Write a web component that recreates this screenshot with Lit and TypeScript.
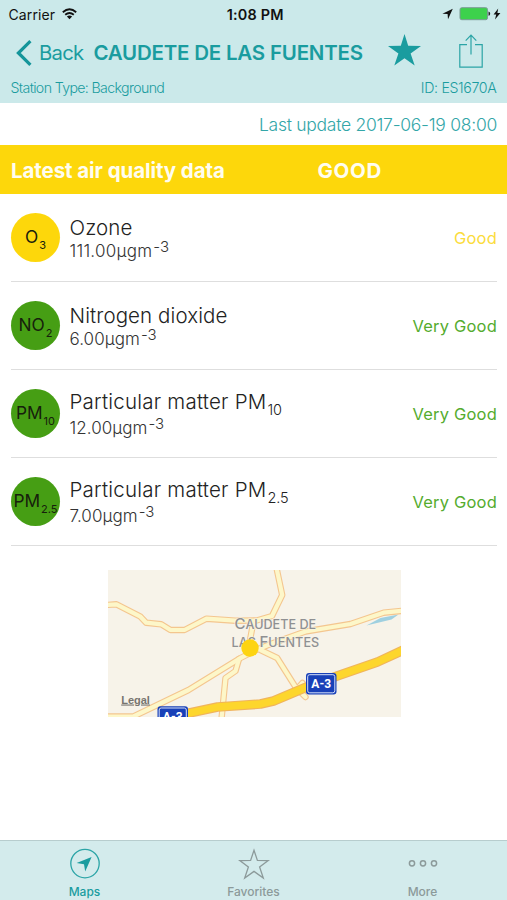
import { LitElement, html, css, svg, nothing } from "lit";
import { customElement, property } from "lit/decorators.js";

interface Reading {
  symbol: string;
  index: string;
  name: string;
  nameIndex?: string;
  value: string;
  rating: string;
  level: "good" | "very-good";
}

const READINGS: Reading[] = [
  { symbol: "O", index: "3", name: "Ozone", value: "111.00", rating: "Good", level: "good" },
  { symbol: "NO", index: "2", name: "Nitrogen dioxide", value: "6.00", rating: "Very Good", level: "very-good" },
  { symbol: "PM", index: "10", name: "Particular matter PM", nameIndex: "10", value: "12.00", rating: "Very Good", level: "very-good" },
  { symbol: "PM", index: "2.5", name: "Particular matter PM", nameIndex: "2.5", value: "7.00", rating: "Very Good", level: "very-good" },
];

@customElement("station-header")
class StationHeader extends LitElement {
  static styles = css`
    :host { display: block; height: 103px; background: #cbe9ea; color: #1a9c9f; }
    svg { display: block; flex: none; }
    .status { display: grid; grid-template-columns: 1fr auto 1fr; align-items: center; height: 28px; padding: 0 5px 0 8.5px; color: #111; font-size: 14px; }
    .carrier { display: flex; align-items: center; gap: 7px; letter-spacing: 0.1px; }
    .time { font-weight: 600; font-size: 14.4px; letter-spacing: 0.2px; }
    .power { display: flex; align-items: center; justify-content: flex-end; }
    .nav { display: flex; align-items: center; height: 49px; padding: 0 24px 0 16px; }
    .back { font-size: 20.3px; margin-left: 7px; letter-spacing: -0.75px; }
    .title { font-size: 20.5px; font-weight: 600; margin-left: 10px; flex: 1; white-space: nowrap; letter-spacing: -0.21px; }
    .star { margin: -5px 38px 0 0; }
    .share { margin-top: -4px; }
    .meta { display: flex; justify-content: space-between; padding: 0 10.5px; font-size: 14.2px; font-weight: 300; line-height: 22px; }
    .type { letter-spacing: -0.65px; }
    .id { letter-spacing: -0.35px; }
  `;
  render() {
    return html`
      <div class="status">
        <div class="carrier"><span>Carrier</span>
          <svg width="15" height="12" viewBox="0 0 15 12" fill="none" stroke="#111" stroke-width="1.8">
            <path d="M0.8 4.2Q7.5 -1.6 14.2 4.2M3.2 6.8Q7.5 3.2 11.8 6.8"/>
            <path d="M7.5 11.2L4.9 8.6Q7.5 6.6 10.1 8.6Z" fill="#111" stroke="none"/>
          </svg>
        </div>
        <span class="time">1:08 PM</span>
        <div class="power">
          <svg width="60" height="14" viewBox="0 0 60 14">
            <path d="M0.4 6.7L10.8 1.8L6 12.2L5.6 7.1Z" fill="#111"/>
            <rect x="18" y=".7" width="27.5" height="12" rx="1.8" fill="#3dd14c" stroke="#7b9a94" stroke-width="1"/>
            <path d="M46.5 4.6Q48.2 4.8 48.2 6.7T46.5 8.8Z" fill="#222"/>
            <path d="M56.2 1.5L51.6 7.6H54.2L53 12.4L58.4 5.9H55.4Z" fill="#111"/>
          </svg>
        </div>
      </div>
      <div class="nav">
        <svg width="16" height="26" viewBox="0 0 16 26" fill="none" stroke="#14959a" stroke-width="3.2"><path d="M14.4 1.2L2.4 13L14.4 24.8"/></svg>
        <span class="back">Back</span>
        <span class="title">CAUDETE DE LAS FUENTES</span>
        <svg class="star" width="33" height="32" viewBox="0 0 33 32" fill="#1a9c9f"><path d="M16.5 0L20.2 11.8L33 12L22.6 19.5L26.7 31.5L16.5 24.3L6.3 31.5L10.4 19.5L0 12L12.8 11.8Z"/></svg>
        <svg class="share" width="24" height="34" viewBox="0 0 24 34" fill="none" stroke="#2ba4a6" stroke-width="1.2"><path d="M8 10.6H.8V33.2H23.2V10.6H16M12 20.5V1.2M6.7 6.6L12 1.2L17.3 6.6"/></svg>
      </div>
      <div class="meta"><span class="type">Station Type: Background</span><span class="id">ID: ES1670A</span></div>
    `;
  }
}

@customElement("reading-row")
class ReadingRow extends LitElement {
  @property({ attribute: false }) reading!: Reading;
  static styles = css`
    :host { display: flex; align-items: center; box-sizing: border-box; height: 88px; margin: 0 10px 0 11px; border-bottom: 1px solid #dedede; }
    .badge { display: flex; align-items: center; justify-content: center; width: 49px; height: 49px; border-radius: 50%; flex: none; font-size: 17.3px; line-height: 20px; color: #16200c; white-space: nowrap; }
    .badge .symbol { transform: translateY(-1.5px); }
    .badge .index { font-size: 11px; margin-left: 1px; transform: translateY(7px); }
    .badge.good { background: #fdd70b; }
    .badge.very-good { background: #469e14; }
    .text { flex: 1; padding: 2px 0 0 9.5px; color: #222; font-weight: 300; }
    .name { font-size: 20.5px; line-height: 24px; white-space: nowrap; letter-spacing: 0.1px; }
    .name.indexed { margin-bottom: 3.5px; letter-spacing: 0.22px; }
    .name .index { display: inline-block; font-size: 14.5px; line-height: 14px; letter-spacing: -0.1px; margin-left: 1px; transform: translateY(6px); }
    .value { font-size: 17px; line-height: 22px; color: #333; letter-spacing: 0.05px; }
    .value.wide { letter-spacing: 0.25px; }
    .power { display: inline-block; font-size: 15px; line-height: 14px; margin-left: 1px; transform: translateY(-5px); }
    .rating { font-size: 16.5px; letter-spacing: 0.2px; }
    .rating.good { color: #fbdc3c; }
    .rating.very-good { color: #55ac2e; }
  `;
  render() {
    const r = this.reading;
    return html`
      <div class="badge ${r.level}"><span class="symbol">${r.symbol}</span><span class="index">${r.index}</span></div>
      <div class="text">
        <div class="name ${r.nameIndex ? "indexed" : ""}">${r.name}${r.nameIndex ? html`<span class="index">${r.nameIndex}</span>` : nothing}</div>
        <div class="value ${r.value.length > 5 ? "wide" : ""}">${r.value}µgm<span class="power">-3</span></div>
      </div>
      <span class="rating ${r.level}">${r.rating}</span>
    `;
  }
}

const MINOR_ROADS = [
  "M105 605L116 604.3L140 616.7L145.7 622.7L160.7 624.3L170 630H184L206 618.7L235 620.7L256 620.5L271.5 616L281.7 595L276 568",
  "M253 621L251 632L248 648",
  "M238.5 659L235 671L225 678L221 719",
  "M260 650L276.7 658L295 687L305 697",
  "M294 692L302 683",
  "M105 716.5H133L188 690L240 658L258 649L270 644L305 631.5L350 624L383 612.7L403 610.7",
];
const HIGHWAY = "M170 717L217 707L260 704L273 701L305 687.5L338 675.5L377 662L403 650";

@customElement("station-map")
class StationMap extends LitElement {
  static styles = css`
    :host { display: block; }
    svg { display: block; width: 293px; height: 147px; }
    .place { font-size: 12.6px; font-weight: 500; fill: #8f9092; stroke: #f7f3e9; stroke-width: 1.2px; paint-order: stroke; }
    .cap { font-size: 15px; }
    .legal { font: 700 11px "Liberation Sans", sans-serif; fill: #77756f; text-decoration: underline; }
    .route { font: 700 12px Roboto, sans-serif; fill: #fff; text-anchor: middle; }
  `;
  private shield(x: number, y: number) {
    return svg`<g transform="translate(${x} ${y})">
      <rect width="30.5" height="21.5" rx="3" fill="#1840b8"/>
      <rect x="1.7" y="1.7" width="27.1" height="18.1" rx="2" fill="#1840b8" stroke="#d5def8" stroke-width="1"/>
      <text class="route" x="15.2" y="15.2">A-3</text></g>`;
  }
  render() {
    return html`<svg viewBox="107.5 570 293 147">
      <rect x="107" y="570" width="294" height="147" fill="#f7f3e9"/>
      <path d="M366 625.5L380 618L398 614.5L391 619.5Z" fill="#9fd0e0"/>
      <g fill="none" stroke-linejoin="round" stroke-linecap="round">
        <g stroke="#f4c68f" stroke-width="6.4">${MINOR_ROADS.map((d) => svg`<path d=${d}/>`)}</g>
        <g stroke="#fdf7c9" stroke-width="4.2">${MINOR_ROADS.map((d) => svg`<path d=${d}/>`)}</g>
        <path d=${HIGHWAY} stroke="#f0b45c" stroke-width="9.6"/>
        <path d=${HIGHWAY} stroke="#fdd62d" stroke-width="7.4"/>
      </g>
      <text class="place" x="234" y="629"><tspan class="cap">C</tspan>AUDETE DE</text>
      <text class="place" x="231" y="647" letter-spacing="0.1">LAS <tspan class="cap">F</tspan>UENTES</text>
      <circle cx="249.5" cy="648" r="8.7" fill="#fdd411"/>
      ${this.shield(305.5, 673)}
      ${this.shield(157, 706.3)}
      <text class="legal" x="120.7" y="703.5">Legal</text>
    </svg>`;
  }
}

@customElement("tab-bar")
class TabBar extends LitElement {
  static styles = css`
    :host { display: grid; grid-template-columns: repeat(3, 1fr); box-sizing: border-box; height: 60px; border-top: 1px solid #b7cdce; background: #d3ebec; }
    .tab { display: flex; flex-direction: column; align-items: center; color: #8c9a9a; font-size: 12px; font-weight: 500; }
    .tab.active { color: #1a9c9f; }
    .icon { display: block; margin-top: 7px; }
    .label { line-height: 16px; margin-top: 4px; }
  `;
  render() {
    return html`
      <div class="tab active">
        <svg class="icon" width="32" height="32" viewBox="0 0 32 32"><circle cx="16" cy="15.6" r="14.2" fill="none" stroke="#2ba4a6" stroke-width="1.3"/><path d="M7.6 15L22.6 8.9L16.2 23.6L15 16.3Z" fill="#1a9c9f"/></svg>
        <span class="label">Maps</span>
      </div>
      <div class="tab">
        <svg class="icon" width="32" height="32" viewBox="0 0 32 32"><path d="M16 2.3L19.4 12.4L30.2 12.6L21.6 19L25.3 30L16 23.4L6.7 30L10.4 19L1.8 12.6L12.6 12.4Z" fill="none" stroke="#8c9a9a" stroke-width="1.3"/></svg>
        <span class="label">Favorites</span>
      </div>
      <div class="tab">
        <svg class="icon" width="32" height="32" viewBox="0 0 32 32" fill="none" stroke="#8c9a9a" stroke-width="1.5"><circle cx="5" cy="15.3" r="2.6"/><circle cx="16" cy="15.3" r="2.6"/><circle cx="27" cy="15.3" r="2.6"/></svg>
        <span class="label">More</span>
      </div>
    `;
  }
}

@customElement("app-root")
class AppRoot extends LitElement {
  static styles = css`
    :host { display: flex; flex-direction: column; height: 900px; overflow: hidden; background: #fff; font-family: Inter, "Liberation Sans", sans-serif; }
    .updated { height: 42px; box-sizing: border-box; padding: 1px 10px 0 0; line-height: 41px; text-align: right; color: #33a6a8; font-size: 17.5px; font-weight: 300; letter-spacing: -0.27px; }
    .banner { display: grid; grid-template-columns: 306.5px 1fr; box-sizing: border-box; height: 49px; padding: 3px 0 0 11px; line-height: 46px; background: #fdd70b; color: #fffdf0; font-size: 20.5px; font-weight: 700; }
    .heading { letter-spacing: -0.08px; }
    .overall { letter-spacing: 0.7px; }
    .map { align-self: center; margin: 24px 0 0 1px; }
    .tabs { margin-top: auto; }
  `;
  render() {
    return html`
      <station-header></station-header>
      <div class="updated">Last update 2017-06-19 08:00</div>
      <div class="banner"><span class="heading">Latest air quality data</span><span class="overall">GOOD</span></div>
      ${READINGS.map((r) => html`<reading-row .reading=${r}></reading-row>`)}
      <station-map class="map"></station-map>
      <tab-bar class="tabs"></tab-bar>
    `;
  }
}
